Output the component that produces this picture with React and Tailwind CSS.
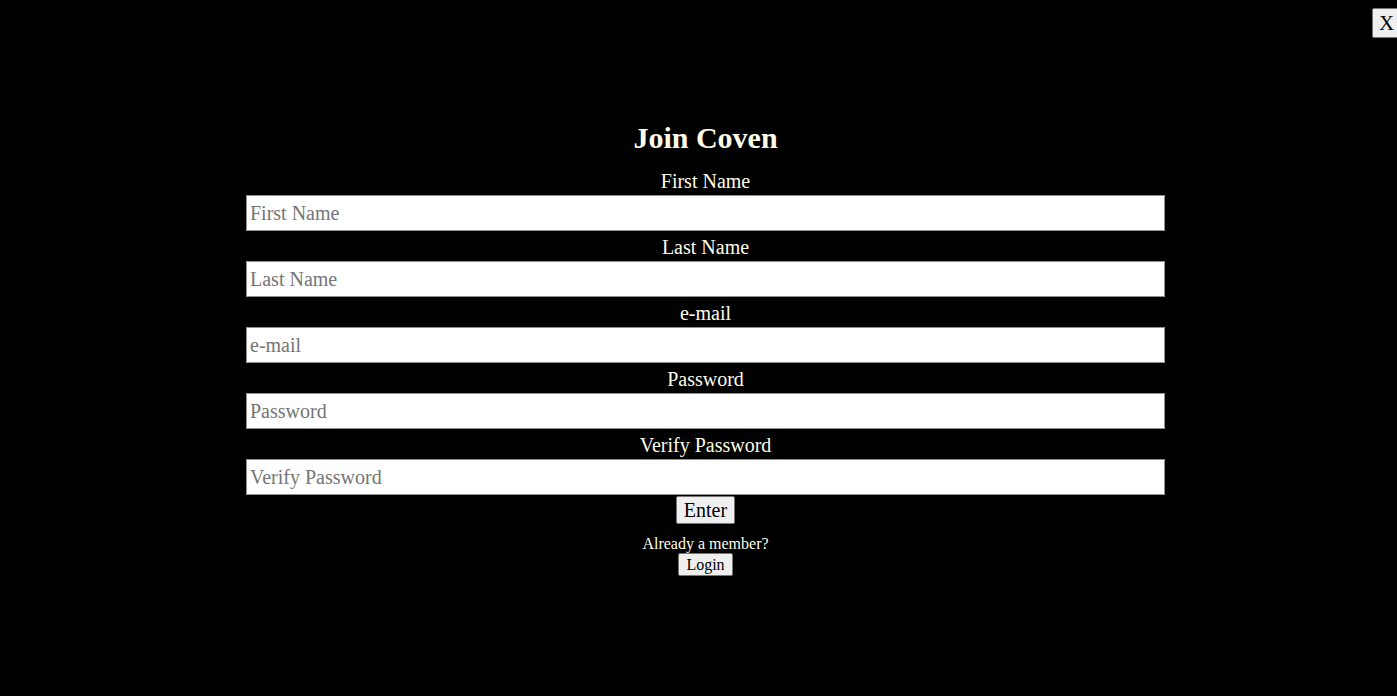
import { useState } from 'react';

// ── Field row: label above a full-width input ─────────────────────────
function Field({ label, type = 'text', value, onChange }) {
  return (
    <div className="flex flex-col items-center w-full">
      <label className="h-[30px] leading-[30px] pt-[1px] text-[20px] text-[#fffde8]">{label}</label>
      <input
        type={type}
        value={value}
        onChange={onChange}
        placeholder={label}
        className="w-full h-[36px] bg-white border border-[#8f8f8f] px-[3px] text-[20px] text-black placeholder:text-[#757575] outline-none"
      />
    </div>
  );
}

export default function App() {
  const [form, setForm] = useState({ first: '', last: '', email: '', password: '', verify: '' });
  const set = (key) => (e) => setForm((f) => ({ ...f, [key]: e.target.value }));

  return (
    <div className="relative h-[696px] w-full overflow-hidden bg-black font-['Liberation_Serif','Times_New_Roman',serif]">
      {/* Close button, cut by the right edge */}
      <button className="absolute left-[1372px] top-[8px] h-[30px] w-[32px] pl-[6px] text-left text-[21px] leading-none text-black bg-[#efefef] border border-[#767676] rounded-[2px]">
        X
      </button>

      <div className="flex justify-center pl-[14px] pt-[119px]">
        <div className="flex w-[919px] flex-col items-center">
          <h2 className="h-[46px] text-[30px] font-bold leading-[38px] text-[#fffde8]">Join Coven</h2>
          <Field label="First Name" value={form.first} onChange={set('first')} />
          <Field label="Last Name" value={form.last} onChange={set('last')} />
          <Field label="e-mail" type="email" value={form.email} onChange={set('email')} />
          <Field label="Password" type="password" value={form.password} onChange={set('password')} />
          <Field label="Verify Password" type="password" value={form.verify} onChange={set('verify')} />

          <button className="mt-[1px] h-[28px] px-[7px] text-[20px] leading-none text-black bg-[#efefef] border border-[#767676] rounded-[2px]">
            Enter
          </button>
          <p className="mt-[11px] text-[16px] leading-[18px] text-[#fffde8]">Already a member?</p>
          <button className="h-[23px] px-[7px] text-[16px] leading-none text-black bg-[#efefef] border border-[#767676] rounded-[2px]">
            Login
          </button>
        </div>
      </div>
    </div>
  );
}
